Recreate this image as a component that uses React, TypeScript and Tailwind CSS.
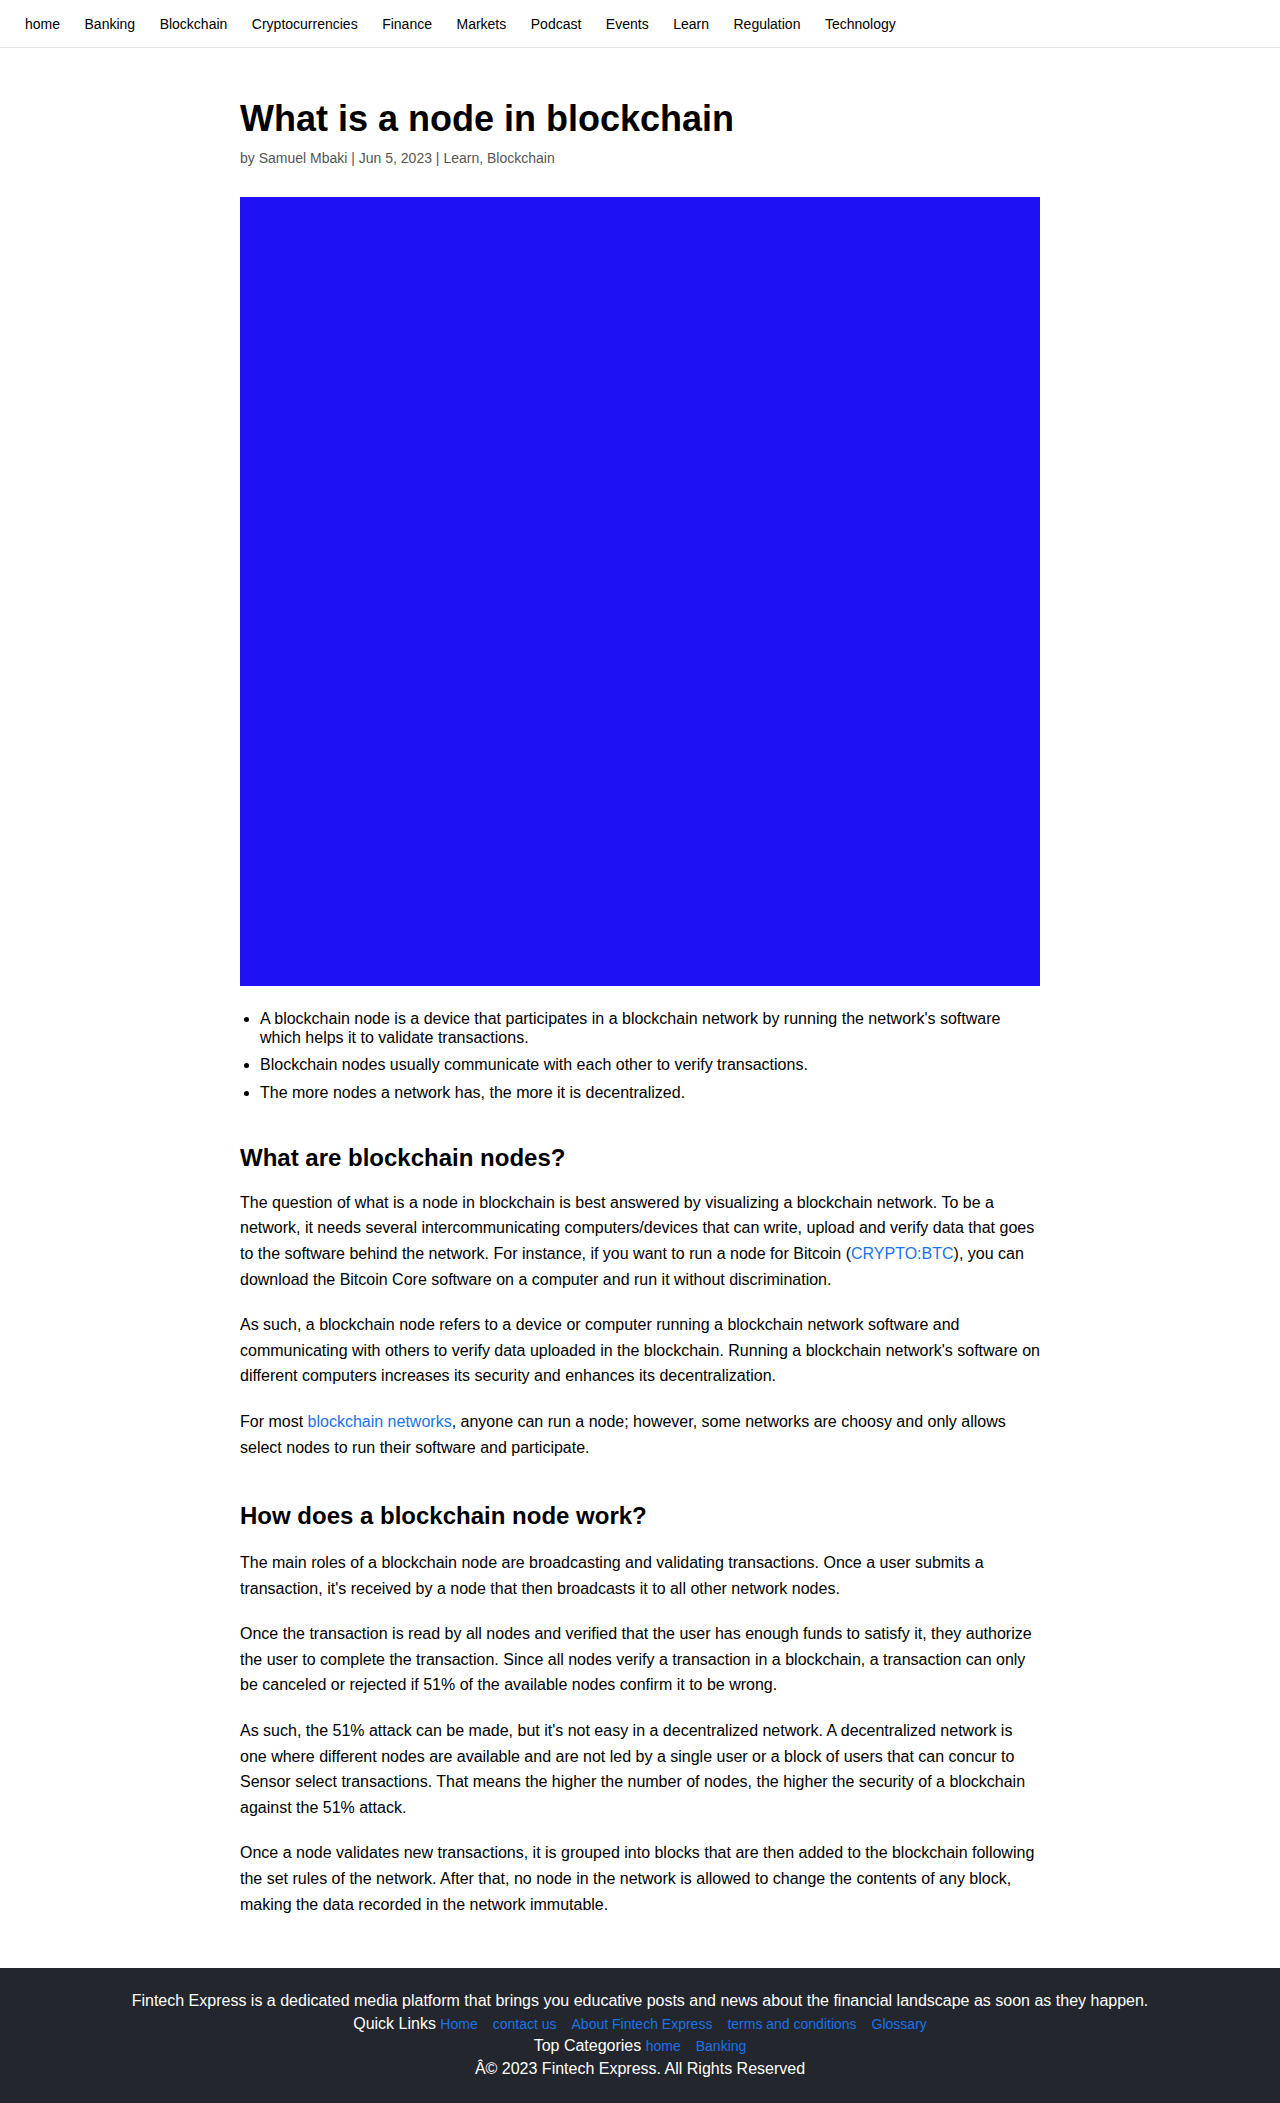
const navItems = [
  "home",
  "Banking",
  "Blockchain",
  "Cryptocurrencies",
  "Finance",
  "Markets",
  "Podcast",
  "Events",
  "Learn",
  "Regulation",
  "Technology",
];

const quickLinks = ["Home", "contact us", "About Fintech Express", "terms and conditions", "Glossary"];

const App = () => {
  return (
    <div className="min-h-screen bg-white text-black font-['Liberation_Sans',Arial,sans-serif]">
      <nav className="h-12 flex items-center px-[25px] gap-[24.5px] border-b border-gray-200 text-sm">
        {navItems.map((item) => (
          <a key={item} href="#" className="text-black">
            {item}
          </a>
        ))}
      </nav>

      <main className="max-w-[800px] mx-auto pt-[48px] pb-[51px]">
        <h1 className="text-4xl font-bold leading-tight">What is a node in blockchain</h1>
        <p className="text-sm text-[#555] mt-[7px]">by Samuel Mbaki | Jun 5, 2023 | Learn, Blockchain</p>

        <div className="mt-[29px] h-[789px] bg-[#1e12f5]" />

        <ul className="list-disc pl-5 mt-[23px] text-base leading-[1.2]">
          <li className="mb-[8px]">
            A blockchain node is a device that participates in a blockchain network by running the network's software which helps it to validate transactions.
          </li>
          <li className="mb-[8px]">Blockchain nodes usually communicate with each other to verify transactions.</li>
          <li>The more nodes a network has, the more it is decentralized.</li>
        </ul>

        <h2 className="text-2xl font-bold mt-[40px] mb-4">What are blockchain nodes?</h2>
        <div className="text-base leading-[1.6] space-y-[20px]">
          <p>
            The question of what is a node in blockchain is best answered by visualizing a blockchain network. To be a network, it needs several intercommunicating computers/devices that can write, upload and verify data that goes to the software behind the network. For instance, if you want to run a node for Bitcoin (<a href="#" className="text-[#1a73e8]">CRYPTO:BTC</a>), you can download the Bitcoin Core software on a computer and run it without discrimination.
          </p>
          <p>
            As such, a blockchain node refers to a device or computer running a blockchain network software and communicating with others to verify data uploaded in the blockchain. Running a blockchain network's software on different computers increases its security and enhances its decentralization.
          </p>
          <p>
            For most <a href="#" className="text-[#1a73e8]">blockchain networks</a>, anyone can run a node; however, some networks are choosy and only allows select nodes to run their software and participate.
          </p>
        </div>

        <h2 className="text-2xl font-bold mt-[40px] mb-[18px]">How does a blockchain node work?</h2>
        <div className="text-base leading-[1.6] space-y-[20px]">
          <p>
            The main roles of a blockchain node are broadcasting and validating transactions. Once a user submits a transaction, it's received by a node that then broadcasts it to all other network nodes.
          </p>
          <p>
            Once the transaction is read by all nodes and verified that the user has enough funds to satisfy it, they authorize the user to complete the transaction. Since all nodes verify a transaction in a blockchain, a transaction can only be canceled or rejected if 51% of the available nodes confirm it to be wrong.
          </p>
          <p>
            As such, the 51% attack can be made, but it's not easy in a decentralized network. A decentralized network is one where different nodes are available and are not led by a single user or a block of users that can concur to Sensor select transactions. That means the higher the number of nodes, the higher the security of a blockchain against the 51% attack.
          </p>
          <p>
            Once a node validates new transactions, it is grouped into blocks that are then added to the blockchain following the set rules of the network. After that, no node in the network is allowed to change the contents of any block, making the data recorded in the network immutable.
          </p>
        </div>
      </main>

      <footer className="bg-[#23262d] text-white text-center pt-[21px] pb-[34px]">
        <p className="text-base leading-[24px]">
          Fintech Express is a dedicated media platform that brings you educative posts and news about the financial landscape as soon as they happen.
        </p>
        <p className="leading-[22px]">
          Quick Links{" "}
          {quickLinks.map((link) => (
            <a key={link} href="#" className="text-sm text-[#1a73e8] mr-[15px] last:mr-0">
              {link}
            </a>
          ))}
        </p>
        <p className="leading-[22px]">
          Top Categories{" "}
          <a href="#" className="text-sm text-[#1a73e8] mr-[15px]">home</a>
          <a href="#" className="text-sm text-[#1a73e8]">Banking</a>
        </p>
        <p className="leading-[24px]">Â© 2023 Fintech Express. All Rights Reserved</p>
      </footer>
    </div>
  );
};

export default App;
